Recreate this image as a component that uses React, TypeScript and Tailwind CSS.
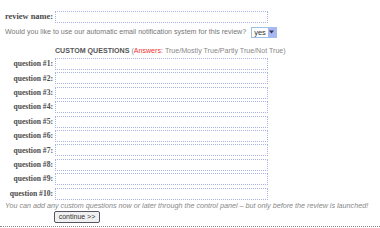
import React from "react";

const labelBase =
  "w-[53px] shrink-0 text-right font-bold leading-none text-[#4a4a4a] whitespace-nowrap";
const serif = { fontFamily: '"Liberation Serif", "Times New Roman", serif' };
const sans = { fontFamily: '"Liberation Sans", Arial, sans-serif' };

function Field() {
  return (
    <div className="ml-[2px] h-[12px] w-[213px] border border-dotted border-[#a9b4e4] bg-white" />
  );
}

export default function App() {
  const qs = Array.from({ length: 10 }, (_, i) => i + 1);
  return (
    <div className="w-[380px] h-[228px] bg-white overflow-hidden relative" style={sans}>
      <div className="pt-[11px]">
        <div className="flex items-center">
          <div className={labelBase + " text-[8.4px]"} style={serif}>review name:</div>
          <Field />
        </div>
        <div className="flex items-center mt-[4px] pl-[5px] h-[10px]">
          <span className="text-[7.1px] text-[#777] whitespace-nowrap">
            Would you like to use our automatic email notification system for this review?
          </span>
          <div className="ml-[5px] flex items-stretch h-[11px] border border-[#9ec0e8] bg-white">
            <span className="px-[2px] text-[7.5px] leading-[9px] text-[#333] bg-white">yes</span>
            <span className="w-[8px] bg-[#a8b6f4] flex items-center justify-center">
              <svg width="5" height="4" viewBox="0 0 5 4">
                <path d="M0 0.5 L2.5 3.5 L5 0.5 Z" fill="#334" />
              </svg>
            </span>
          </div>
        </div>
        <div className="mt-[11px] ml-[55px] flex items-baseline whitespace-nowrap text-[7.1px] leading-none">
          <span className="font-bold text-[#555]">CUSTOM QUESTIONS</span>
          <span className="ml-[2px] text-[#888]">(</span>
          <span className="text-[#ee3333]">Answers:</span>
          <span className="ml-[2px] text-[#888]">True/Mostly True/Partly True/Not True)</span>
        </div>
        <div className="mt-[3px] flex flex-col gap-[2.4px]">
          {qs.map((n) => (
            <div key={n} className="flex items-center">
              <div className={labelBase + " text-[7.6px]"} style={serif}>
                question #{n}:
              </div>
              <Field />
            </div>
          ))}
        </div>
        <div className="mt-[2px] pl-[5px] text-[7.2px] italic text-[#888] whitespace-nowrap leading-none">
          You can add any custom questions now or later through the control panel – but only before the review is launched!
        </div>
        <div className="mt-[2px] ml-[54px] w-[46px] h-[12px] border border-[#556] rounded-[2px] bg-[#f0f0f0] flex items-center justify-center text-[7px] text-[#333] leading-none">
          continue &gt;&gt;
        </div>
        <div className="mt-[3px] border-b border-dotted border-[#888]" />
      </div>
    </div>
  );
}
